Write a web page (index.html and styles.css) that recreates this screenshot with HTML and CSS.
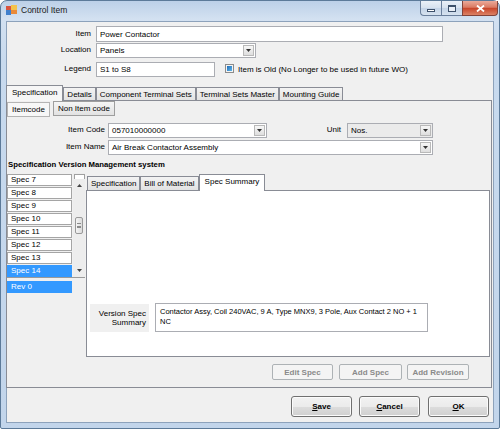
FILE: index.html
```html
<!DOCTYPE html>
<html>
<head>
<meta charset="utf-8">
<title>Control Item</title>
<link rel="stylesheet" href="styles.css">
</head>
<body>
<div class="window">
  <div class="titlebar">
    <svg class="app-icon" width="11" height="10" viewBox="0 0 11 10">
      <rect x="0" y="1" width="5" height="4" fill="#d9533f"/>
      <rect x="5" y="0" width="6" height="5" fill="#f3c24b"/>
      <rect x="0" y="5" width="5" height="5" fill="#3f7fcc"/>
      <rect x="5" y="5" width="6" height="4" fill="#e98a3a"/>
    </svg>
    <span class="title">Control Item</span>
    <div class="winbtns">
      <div class="wb wb-min"><span class="min-glyph"></span></div>
      <div class="wb wb-max"><span class="max-glyph"></span></div>
      <div class="wb wb-close">
        <svg width="9" height="7" viewBox="0 0 9 7"><path d="M1 0.5L8 6.5M8 0.5L1 6.5" stroke="#fff" stroke-width="1.8"/></svg>
      </div>
    </div>
  </div>

  <div class="client">
    <div class="top-form">
      <div class="frow r1">
        <span class="lbl">Item</span>
        <div class="textbox w-item">Power Contactor</div>
      </div>
      <div class="frow r2">
        <span class="lbl">Location</span>
        <div class="combo w-loc"><span class="val">Panels</span><span class="arrow"><svg width="5" height="3" viewBox="0 0 5 3"><path d="M0 0H5L2.5 3Z" fill="#333"/></svg></span></div>
      </div>
      <div class="frow r3">
        <span class="lbl">Legend</span>
        <div class="textbox w-legend">S1 to S8</div>
        <span class="check"><span class="check-fill"></span></span>
        <span class="check-lbl">Item is Old (No Longer to be used in future WO)</span>
      </div>
    </div>

    <div class="tabs outer">
      <div class="tabstrip">
        <div class="tab sel">Specification</div>
        <div class="tab">Details</div>
        <div class="tab">Component Terminal Sets</div>
        <div class="tab">Terminal Sets Master</div>
        <div class="tab">Mounting Guide</div>
      </div>
      <div class="outer-panel">
        <div class="btn-tabs">
          <div class="btab sel">Itemcode</div>
          <div class="btab">Non Item code</div>
        </div>
        <div class="crow c1">
          <span class="clbl">Item Code</span>
          <div class="combo w-code"><span class="val">057010000000</span><span class="arrow"><svg width="5" height="3" viewBox="0 0 5 3"><path d="M0 0H5L2.5 3Z" fill="#333"/></svg></span></div>
          <span class="ulbl">Unit</span>
          <div class="combo w-unit"><span class="val">Nos.</span><span class="arrow"><svg width="5" height="3" viewBox="0 0 5 3"><path d="M0 0H5L2.5 3Z" fill="#333"/></svg></span></div>
        </div>
        <div class="crow c2">
          <span class="clbl">Item Name</span>
          <div class="combo w-name"><span class="val">Air Break Contactor Assembly</span><span class="arrow"><svg width="5" height="3" viewBox="0 0 5 3"><path d="M0 0H5L2.5 3Z" fill="#333"/></svg></span></div>
        </div>
        <div class="heading">Specification Version Management system</div>

        <div class="lower">
          <div class="left-col">
            <div class="spec-list">
              <div class="items">
                <div class="item">Spec 7</div>
                <div class="item">Spec 8</div>
                <div class="item">Spec 9</div>
                <div class="item">Spec 10</div>
                <div class="item">Spec 11</div>
                <div class="item">Spec 12</div>
                <div class="item">Spec 13</div>
                <div class="item sel">Spec 14</div>
              </div>
              <div class="scrollbar">
                <span class="sb-cap"></span>
                <span class="sb-btn"><svg width="5" height="3" viewBox="0 0 5 3"><path d="M0 3H5L2.5 0Z" fill="#444"/></svg></span>
                <span class="sb-thumb"><span class="grip"></span></span>
                <span class="sb-btn sb-down"><svg width="5" height="3" viewBox="0 0 5 3"><path d="M0 0H5L2.5 3Z" fill="#444"/></svg></span>
              </div>
            </div>
            <div class="item sel rev">Rev 0</div>
          </div>

          <div class="inner-tabs">
            <div class="inner-strip">
              <div class="itab">Specification</div>
              <div class="itab">Bill of Material</div>
              <div class="itab sel">Spec Summary</div>
            </div>
            <div class="inner-panel">
              <div class="summary">
                <div class="sum-lbl"><span>Version Spec</span><span>Summary</span></div>
                <div class="sum-text">Contactor Assy, Coil 240VAC, 9 A, Type MNX9, 3 Pole, Aux Contact 2 NO + 1 NC</div>
              </div>
            </div>
          </div>
        </div>

        <div class="actions">
          <div class="abtn a-edit">Edit Spec</div>
          <div class="abtn a-add">Add Spec</div>
          <div class="abtn a-rev">Add Revision</div>
        </div>
      </div>
    </div>

    <div class="footer">
      <div class="fbtn"><span><u>S</u>ave</span></div>
      <div class="fbtn f-cancel"><span><u>C</u>ancel</span></div>
      <div class="fbtn f-ok"><span><u>O</u>K</span></div>
    </div>
  </div>
</div>
</body>
</html>
```

FILE: styles.css
```css
* { box-sizing: border-box; margin: 0; padding: 0; }
html, body { width: 500px; height: 429px; overflow: hidden; }
body {
  font-family: "Liberation Sans", Arial, sans-serif;
  font-size: 8px;
  color: #000;
  background: #fff;
}

/* window frame */
.window {
  width: 500px;
  height: 429px;
  border: 1px solid #5c7a99;
  border-radius: 7px 7px 2px 2px;
  background: linear-gradient(180deg, #bcd0e8 0%, #d3e1f1 18px, #c8daee 60px, #c2d5eb 100%);
  display: flex;
  flex-direction: column;
}
.titlebar { height: 20px; flex: none; display: flex; align-items: flex-start; }
.app-icon { margin: 4px 0 0 5px; flex: none; }
.title { margin: 4px 0 0 4px; font-size: 8.5px; line-height: 10px; color: #1a1a1a; }
.winbtns { margin-left: auto; margin-right: 1px; display: flex; height: 15px; }
.wb {
  height: 15px;
  border: 1px solid #6a7f9c;
  border-top: none;
  display: flex;
  align-items: center;
  justify-content: center;
  background: linear-gradient(#eaf0f8, #d6e1ee 50%, #c3d3e7 51%, #d6e2ef);
}
.wb-min { width: 21px; border-radius: 0 0 0 4px; border-right: none; }
.wb-max { width: 21px; border-right: none; }
.wb-close {
  width: 36px;
  border-radius: 0 0 4px 0;
  border-color: #83443a;
  background: linear-gradient(#eaaa9a, #da7a63 45%, #c8462b 52%, #dc8366);
}
.min-glyph { width: 8px; height: 3px; margin-top: 5px; border: 1px solid #3d506a; background: #fff; }
.max-glyph { width: 8px; height: 7px; border: 1px solid #3d506a; border-top-width: 2px; background: #e9eff7; }

/* client */
.client {
  flex: 1;
  margin: 0 5px 5px 5px;
  background: #f0f0f0;
  border: 1px solid #8da2bb;
  display: flex;
  flex-direction: column;
}

/* top form */
.top-form { padding-top: 4px; }
.frow { display: flex; align-items: center; }
.r1 { height: 16px; }
.r2 { height: 15px; margin-top: 1px; }
.r3 { height: 15px; margin-top: 4px; }
.lbl { width: 84px; flex: none; text-align: right; margin-right: 5px; padding-bottom: 2px; }
.textbox {
  height: 100%;
  border: 1px solid #abadb3;
  background: #fff;
  padding-left: 3px;
  display: flex;
  align-items: center;
  white-space: nowrap;
}
.w-item { width: 347px; }
.w-legend { width: 119px; }
.combo {
  height: 100%;
  border: 1px solid #abadb3;
  background: #fff;
  display: flex;
  align-items: center;
  flex: none;
}
.combo .val { flex: 1; padding-left: 3px; white-space: nowrap; overflow: hidden; }
.combo .arrow {
  width: 11px;
  height: 11px;
  margin-right: 1px;
  border: 1px solid #b9b9b9;
  background: linear-gradient(#f7f7f7, #dedede);
  display: flex;
  align-items: center;
  justify-content: center;
}
.w-loc { width: 160px; }
.check {
  width: 9px;
  height: 9px;
  margin: 0 0 2px 10px;
  border: 1px solid #8c8c8c;
  background: #f4f4f4;
  padding: 1px;
  display: flex;
}
.check-fill { flex: 1; background: linear-gradient(135deg, #1f6cb8, #5fb6ea); }
.check-lbl { margin-left: 4px; white-space: nowrap; }

/* outer tabs */
.tabs.outer { margin: 8px 1px 0 -1px; }
.tabstrip { display: flex; align-items: flex-end; height: 15px; }
.tab {
  height: 13px;
  padding: 0 3px;
  border: 1px solid #898c95;
  border-bottom: none;
  background: linear-gradient(#f3f3f3, #e3e3e3);
  display: flex;
  align-items: center;
  white-space: nowrap;
}
.tab.sel {
  height: 16px;
  margin-bottom: -1px;
  padding: 0 5px 2px;
  background: #f6f6f6;
  position: relative;
  z-index: 1;
}
.outer-panel {
  height: 288px;
  border: 1px solid #898c95;
  background: #f0f0f0;
  display: flex;
  flex-direction: column;
}

.btn-tabs { display: flex; height: 16px; align-items: flex-start; gap: 3px; }
.btab {
  height: 15px;
  padding: 0 4px;
  border: 1px solid #9e9e9e;
  background: linear-gradient(#f5f5f5, #e2e2e2);
  display: flex;
  align-items: center;
  white-space: nowrap;
}
.btab.sel { margin-top: 1px; background: #f7f7f7; border-color: #b4b4b4; }

.crow { display: flex; align-items: center; height: 15px; }
.crow.c1 { margin-top: 6px; }
.crow.c2 { margin-top: 2px; }
.clbl { width: 98px; flex: none; text-align: right; margin-right: 3px; padding-bottom: 2px; }
.ulbl { width: 74px; flex: none; text-align: right; margin-right: 6px; padding-bottom: 2px; }
.w-code { width: 159px; }
.w-unit { width: 86px; background: #ebebeb; }
.w-name { width: 325px; }

.heading {
  margin-top: 4px;
  height: 12px;
  line-height: 12px;
  padding-left: 1px;
  font-weight: bold;
  font-size: 7.75px;
  white-space: nowrap;
}

/* lower area */
.lower { margin-top: 2px; height: 184px; display: flex; }
.left-col { width: 79px; flex: none; }
.spec-list { width: 78px; height: 105px; display: flex; border-bottom: 1px solid #9a9a9a; }
.items { width: 66px; flex: none; padding-top: 1px; display: flex; flex-direction: column; gap: 1px; }
.item {
  width: 65px;
  height: 12px;
  border: 1px solid #a5a5a5;
  background: #fff;
  padding-left: 3px;
  line-height: 10px;
  white-space: nowrap;
}
.item.sel { background: #3399ff; border-color: #3399ff; color: #fff; }
.rev { margin-top: 3px; }

.scrollbar {
  width: 12px;
  flex: none;
  display: flex;
  flex-direction: column;
  align-items: center;
  background: #ededed;
  padding-top: 1px;
}
.sb-cap { width: 11px; height: 5px; border: 1px solid #a0a0a0; border-bottom: none; background: #fff; }
.sb-btn { width: 11px; height: 12px; display: flex; align-items: center; justify-content: center; }
.sb-thumb {
  width: 8px;
  height: 17px;
  margin-top: 26px;
  border: 1px solid #999;
  border-radius: 2px;
  background: linear-gradient(90deg, #f4f4f4, #dcdcdc);
  display: flex;
  align-items: center;
  justify-content: center;
}
.grip { width: 4px; height: 5px; border-top: 1px solid #8a8a8a; border-bottom: 1px solid #8a8a8a; background: linear-gradient(transparent 1.5px, #8a8a8a 1.5px, #8a8a8a 2.5px, transparent 2.5px); }
.sb-down { margin-top: auto; margin-bottom: 1px; }

/* inner tabs */
.inner-tabs { flex: 1; margin: 1px 1px 0 0; display: flex; flex-direction: column; }
.inner-strip { height: 16px; display: flex; align-items: flex-end; padding-left: 1px; }
.itab {
  height: 14px;
  padding: 0 3px;
  border: 1px solid #898c95;
  border-bottom: none;
  background: linear-gradient(#f3f3f3, #e2e2e2);
  display: flex;
  align-items: center;
  white-space: nowrap;
}
.itab.sel {
  height: 17px;
  margin-bottom: -1px;
  padding: 0 5px 3px;
  background: #fff;
  position: relative;
  z-index: 1;
}
.inner-panel {
  height: 167px;
  border: 1px solid #898c95;
  background: #fff;
  display: flex;
  flex-direction: column;
  justify-content: flex-end;
  padding: 0 0 24px 3px;
}
.summary { display: flex; align-items: flex-end; }
.sum-lbl {
  width: 59px;
  height: 28px;
  margin-right: 6px;
  background: #f0f0f0;
  padding-right: 3px;
  display: flex;
  flex-direction: column;
  justify-content: center;
  align-items: flex-end;
  line-height: 9px;
}
.sum-text {
  width: 273px;
  height: 29px;
  border: 1px solid #abadb3;
  padding: 3px 4px 0 4px;
  line-height: 10px;
  font-size: 7.5px;
}

/* action buttons */
.actions { margin-top: 7px; height: 16px; display: flex; justify-content: flex-end; padding-right: 22px; }
.abtn {
  height: 16px;
  border: 1px solid #adb2b5;
  border-radius: 2px;
  background: #f4f4f4;
  color: #8a8a8a;
  font-weight: bold;
  display: flex;
  align-items: center;
  justify-content: center;
  white-space: nowrap;
}
.a-edit { width: 61px; }
.a-add { width: 63px; margin-left: 6px; }
.a-rev { width: 62px; margin-left: 5px; }

/* footer */
.footer { height: 34px; display: flex; justify-content: flex-end; align-items: flex-start; padding: 8px 4px 0 0; }
.fbtn {
  width: 61px;
  height: 21px;
  border: 1px solid #707070;
  border-radius: 3px;
  background: linear-gradient(#f2f2f2 0%, #ebebeb 50%, #dddddd 50%, #cfcfcf 100%);
  box-shadow: inset 0 0 0 1px #fbfbfb;
  font-weight: bold;
  display: flex;
  align-items: center;
  justify-content: center;
}
.f-cancel { margin-left: 7px; }
.f-ok { margin-left: 8px; }
```
